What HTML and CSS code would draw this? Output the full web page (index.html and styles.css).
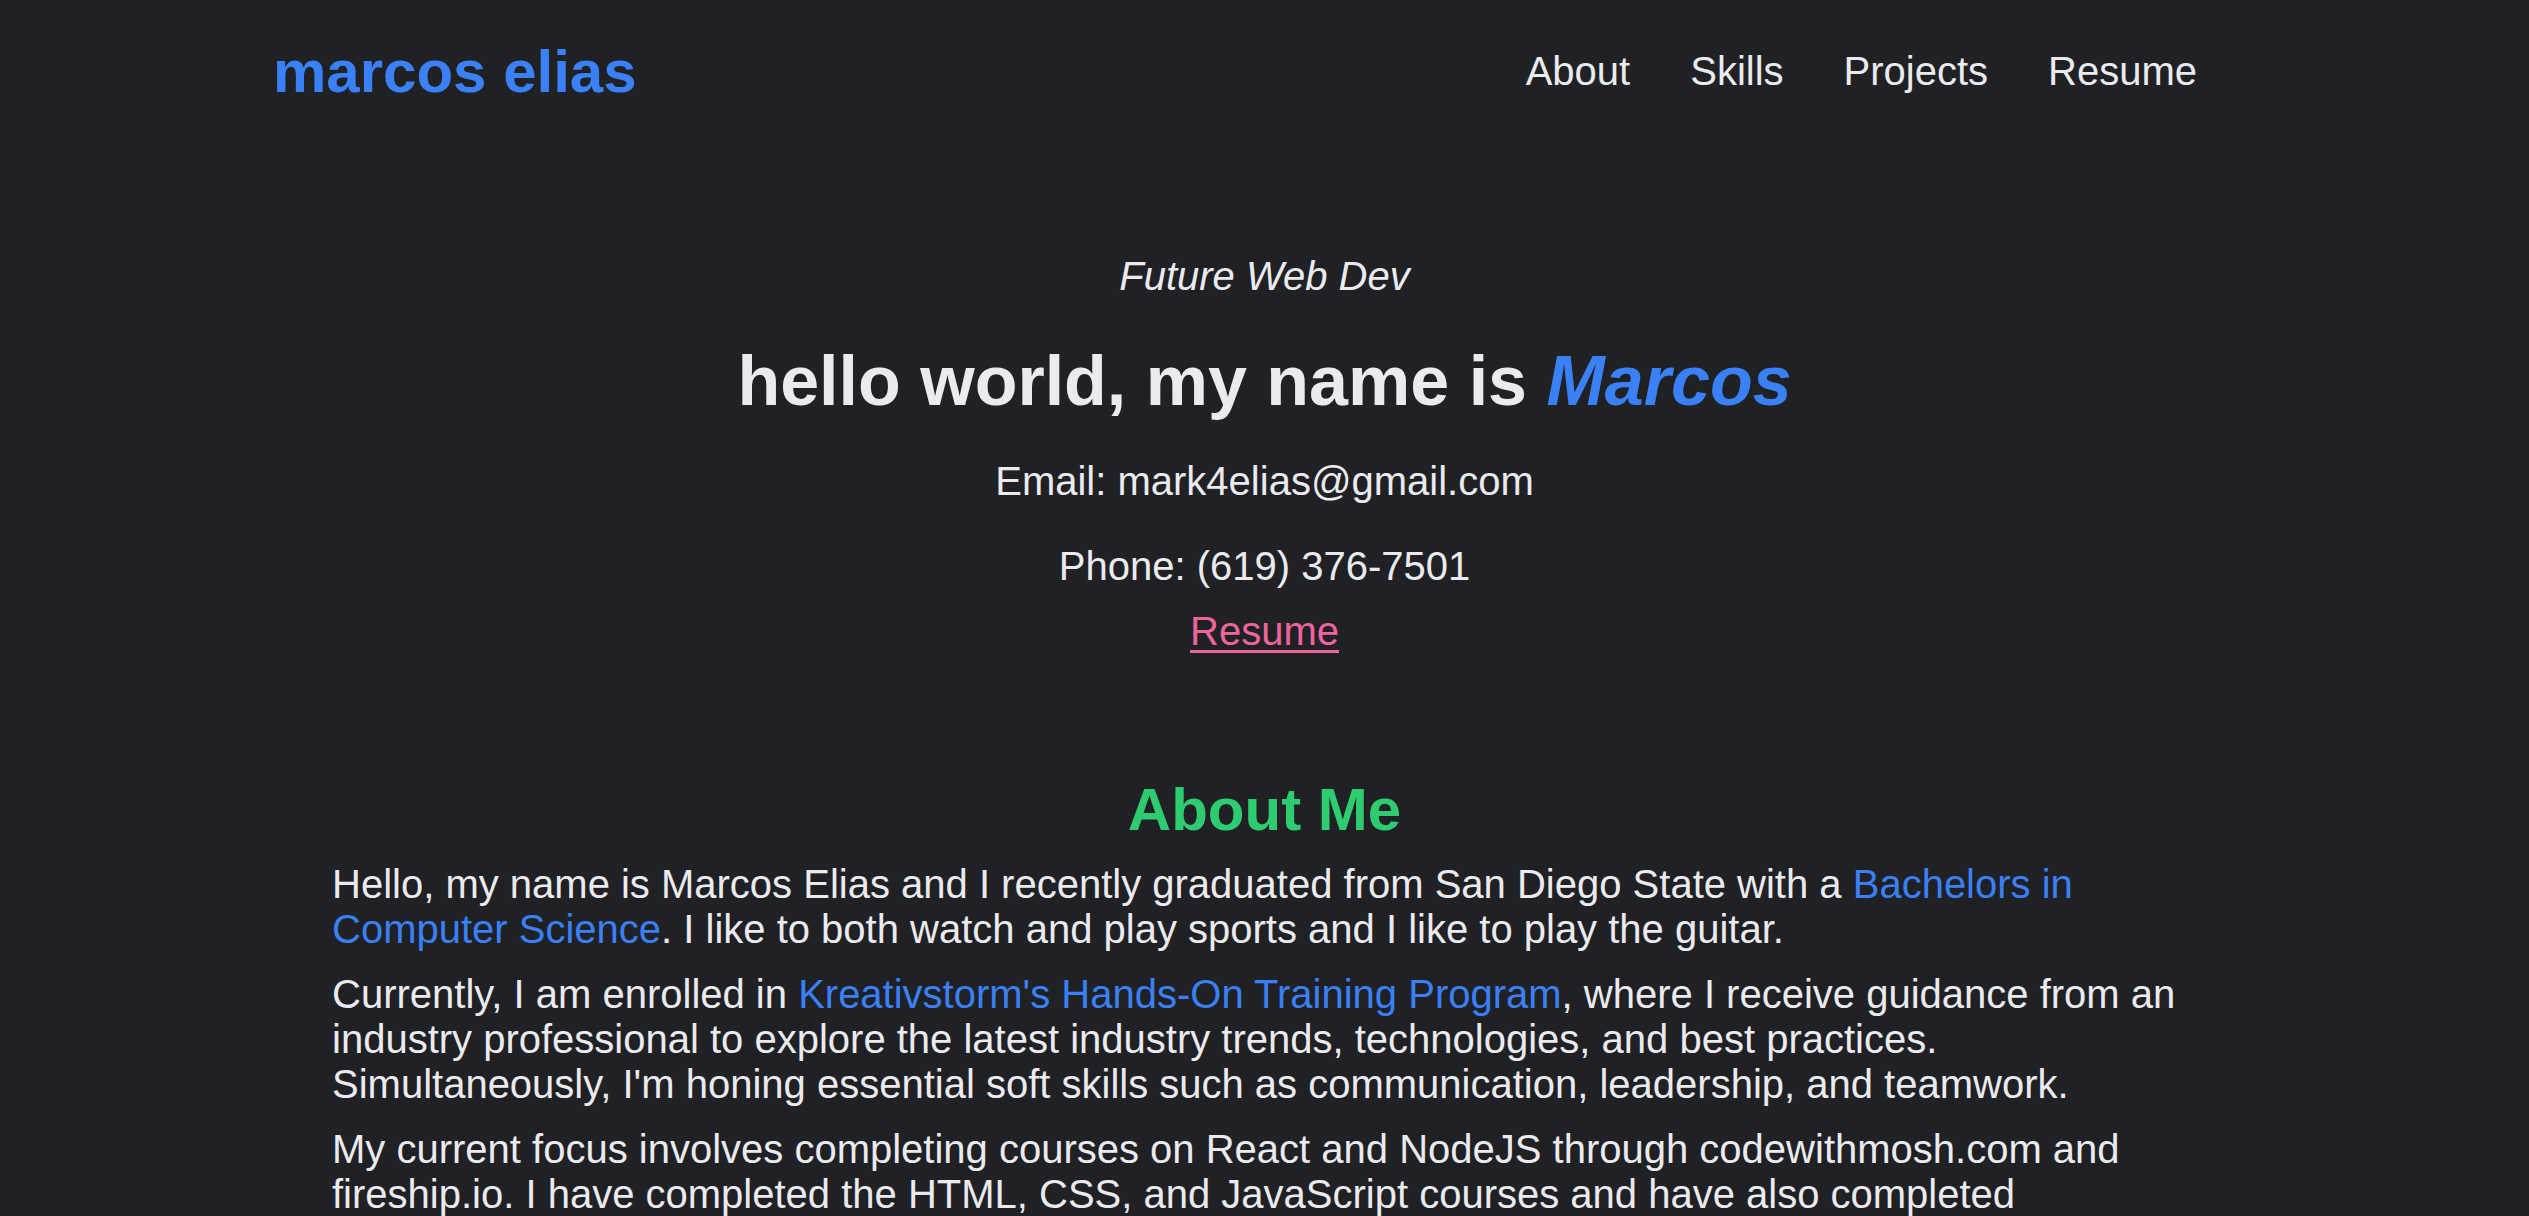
FILE: index.html
```html
<!DOCTYPE html>
<html lang="en">
<head>
<meta charset="utf-8">
<title>marcos elias</title>
<link rel="stylesheet" href="styles.css">
</head>
<body>
<header class="site-header">
  <a class="logo" href="#">marcos elias</a>
  <nav class="nav">
    <a href="#about">About</a>
    <a href="#skills">Skills</a>
    <a href="#projects">Projects</a>
    <a href="#resume">Resume</a>
  </nav>
</header>
<main>
  <section class="hero">
    <p class="tagline">Future Web Dev</p>
    <h1 class="hero-title">hello world, my name is <em class="name">Marcos</em></h1>
    <p class="contact contact-email">Email: mark4elias@gmail.com</p>
    <p class="contact contact-phone">Phone: (619) 376-7501</p>
    <a class="resume-link" href="#resume">Resume</a>
  </section>
  <section class="about" id="about">
    <h2 class="about-title">About Me</h2>
    <p>Hello, my name is Marcos Elias and I recently graduated from San Diego State with a <span class="hl">Bachelors in Computer Science</span>. I like to both watch and play sports and I like to play the guitar.</p>
    <p>Currently, I am enrolled in <span class="hl">Kreativstorm's Hands-On Training Program</span>, where I receive guidance from an industry professional to explore the latest industry trends, technologies, and best practices. Simultaneously, I'm honing essential soft skills such as communication, leadership, and teamwork.</p>
    <p>My current focus involves completing courses on React and NodeJS through codewithmosh.com and fireship.io. I have completed the HTML, CSS, and JavaScript courses and have also completed responsive web projects along the way, strengthening my skills as a developer.</p>
  </section>
</main>
</body>
</html>
```
FILE: styles.css
```css
html, body {
  margin: 0;
  padding: 0;
  background: #202125;
  color: #ebebef;
  font-family: "Liberation Sans", Arial, sans-serif;
}

.site-header {
  height: 142px;
  display: flex;
  align-items: center;
  justify-content: space-between;
  padding: 0 273px;
}

.logo {
  font-size: 60px;
  font-weight: 700;
  color: #3a80f7;
  text-decoration: none;
  line-height: 69px;
}

.nav {
  display: flex;
  gap: 60px;
  padding-right: 59px;
}

.nav a {
  font-size: 40px;
  color: #ebebef;
  text-decoration: none;
  line-height: 46px;
}

.hero {
  display: flex;
  flex-direction: column;
  align-items: center;
  text-align: center;
  padding-top: 111px;
}

.tagline {
  margin: 0;
  font-size: 40px;
  font-style: italic;
  line-height: 46px;
}

.hero-title {
  margin: 42px 0 0;
  font-size: 70px;
  font-weight: 700;
  line-height: 80px;
}

.name {
  color: #3a80f7;
  font-style: italic;
}

.contact {
  margin: 0;
  font-size: 40px;
  line-height: 46px;
}

.contact-email {
  margin-top: 37px;
}

.contact-phone {
  margin-top: 39px;
}

.resume-link {
  margin-top: 19px;
  font-size: 40px;
  line-height: 46px;
  color: #f0649e;
  text-decoration: underline;
  text-decoration-thickness: 3px;
  text-underline-offset: 5px;
}

.about {
  padding: 121px 332px 0;
}

.about-title {
  margin: 0 0 18px;
  text-align: center;
  font-size: 60px;
  font-weight: 700;
  line-height: 69px;
  color: #2ecc71;
}

.about p {
  margin: 0 0 20px;
  font-size: 40px;
  line-height: 45px;
}

.hl {
  color: #3a80f7;
}
```
